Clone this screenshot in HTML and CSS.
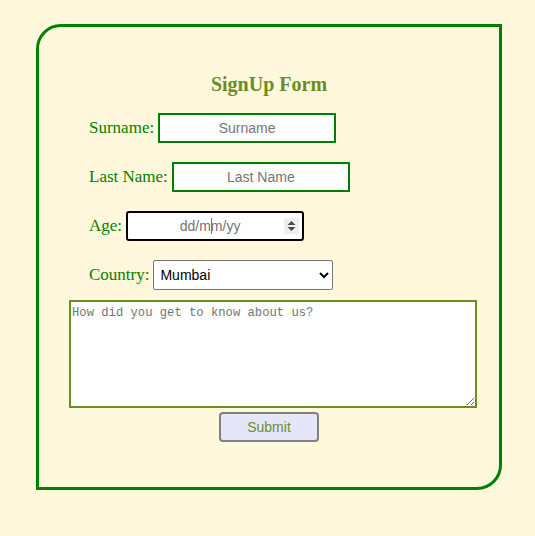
FILE: index.html
```html
<!DOCTYPE html>
<html>
<head>
<meta charset="utf-8">
<link rel="stylesheet" href="styles.css">
</head>
<body>
<div class="card">
  <h3 class="title">SignUp Form</h3>
  <form class="form">
    <div class="row">
      <label class="lbl" for="s">Surname:</label>
      <input class="txt" id="s" type="text" placeholder="Surname">
    </div>
    <div class="row">
      <label class="lbl" for="l">Last Name:</label>
      <input class="txt" id="l" type="text" placeholder="Last Name">
    </div>
    <div class="row">
      <label class="lbl" for="a">Age:</label>
      <span class="agewrap">
        <input class="txt age" id="a" type="text" placeholder="dd/mm/yy">
        <span class="caret"></span>
        <svg class="spin" width="15" height="16" viewBox="0 0 15 16"><rect width="15" height="16" fill="#efefef"/><path d="M3.5 7 L7.5 3 L11.5 7 Z M3.5 9 L7.5 13 L11.5 9 Z" fill="#4a4a4a"/></svg>
      </span>
    </div>
    <div class="row">
      <label class="lbl" for="c">Country:</label>
      <select class="sel" id="c"><option>Mumbai</option></select>
    </div>
    <textarea class="msg" placeholder="How did you get to know about us?"></textarea>
    <div class="btnrow"><button class="btn" type="button">Submit</button></div>
  </form>
</div>
</body>
</html>
```
FILE: styles.css
```css
html, body { margin: 0; padding: 0; }
body { background: #fff8dc; font-family: "Liberation Serif", serif; }
.card {
  box-sizing: border-box;
  width: 466px;
  height: 466px;
  margin: 24px 0 0 36px;
  border: 3px solid #008000;
  border-radius: 25px 0 25px 0;
  padding-top: 46px;
}
.title {
  margin: 0;
  text-align: center;
  font-size: 20px;
  line-height: 22px;
  font-weight: bold;
  color: #6b8e23;
}
.form { margin-top: 18px; display: flex; flex-direction: column; }
.row {
  display: flex;
  align-items: center;
  gap: 4px;
  padding-left: 50px;
  height: 30px;
  margin-bottom: 19px;
}
.row:nth-child(4) { margin-bottom: 10px; }
.lbl { font-size: 17px; color: #008000; }
.txt {
  box-sizing: border-box;
  width: 178px;
  height: 30px;
  border: 2px solid #008000;
  background: #fff;
  text-align: center;
  font-family: "Liberation Sans", Arial, sans-serif;
  font-size: 14px;
  padding: 0 4px;
  outline: none;
}
.txt::placeholder { color: #757575; }
.agewrap { position: relative; display: inline-block; height: 30px; }
.age { border-color: #000; border-radius: 3px; padding-right: 14px; }
.caret { position: absolute; left: 85px; top: 7px; width: 1px; height: 16px; background: #6b8e23; }
.spin { position: absolute; left: 158px; top: 7px; }
.sel {
  box-sizing: border-box;
  width: 180px;
  height: 30px;
  border: 1px solid #767676;
  border-radius: 2px;
  background: #fff;
  font-family: "Liberation Sans", Arial, sans-serif;
  font-size: 14px;
  color: #000;
  padding: 0 2px;
}
.msg {
  box-sizing: border-box;
  width: 408px;
  height: 108px;
  margin: 0 0 0 30px;
  border: 2px solid #6b8e23;
  background: #fff;
  font-family: "Liberation Mono", monospace;
  font-size: 12.2px;
  padding: 4px 1px;
  resize: both;
  outline: none;
}
.msg::placeholder { color: #757575; }
.btnrow { display: flex; justify-content: center; margin-top: 4px; }
.btn {
  box-sizing: border-box;
  width: 100px;
  height: 30px;
  background: #e6e6fa;
  border: 2px solid #808080;
  border-radius: 4px;
  color: #6b8e23;
  font-family: "Liberation Sans", Arial, sans-serif;
  font-size: 14px;
}
```
